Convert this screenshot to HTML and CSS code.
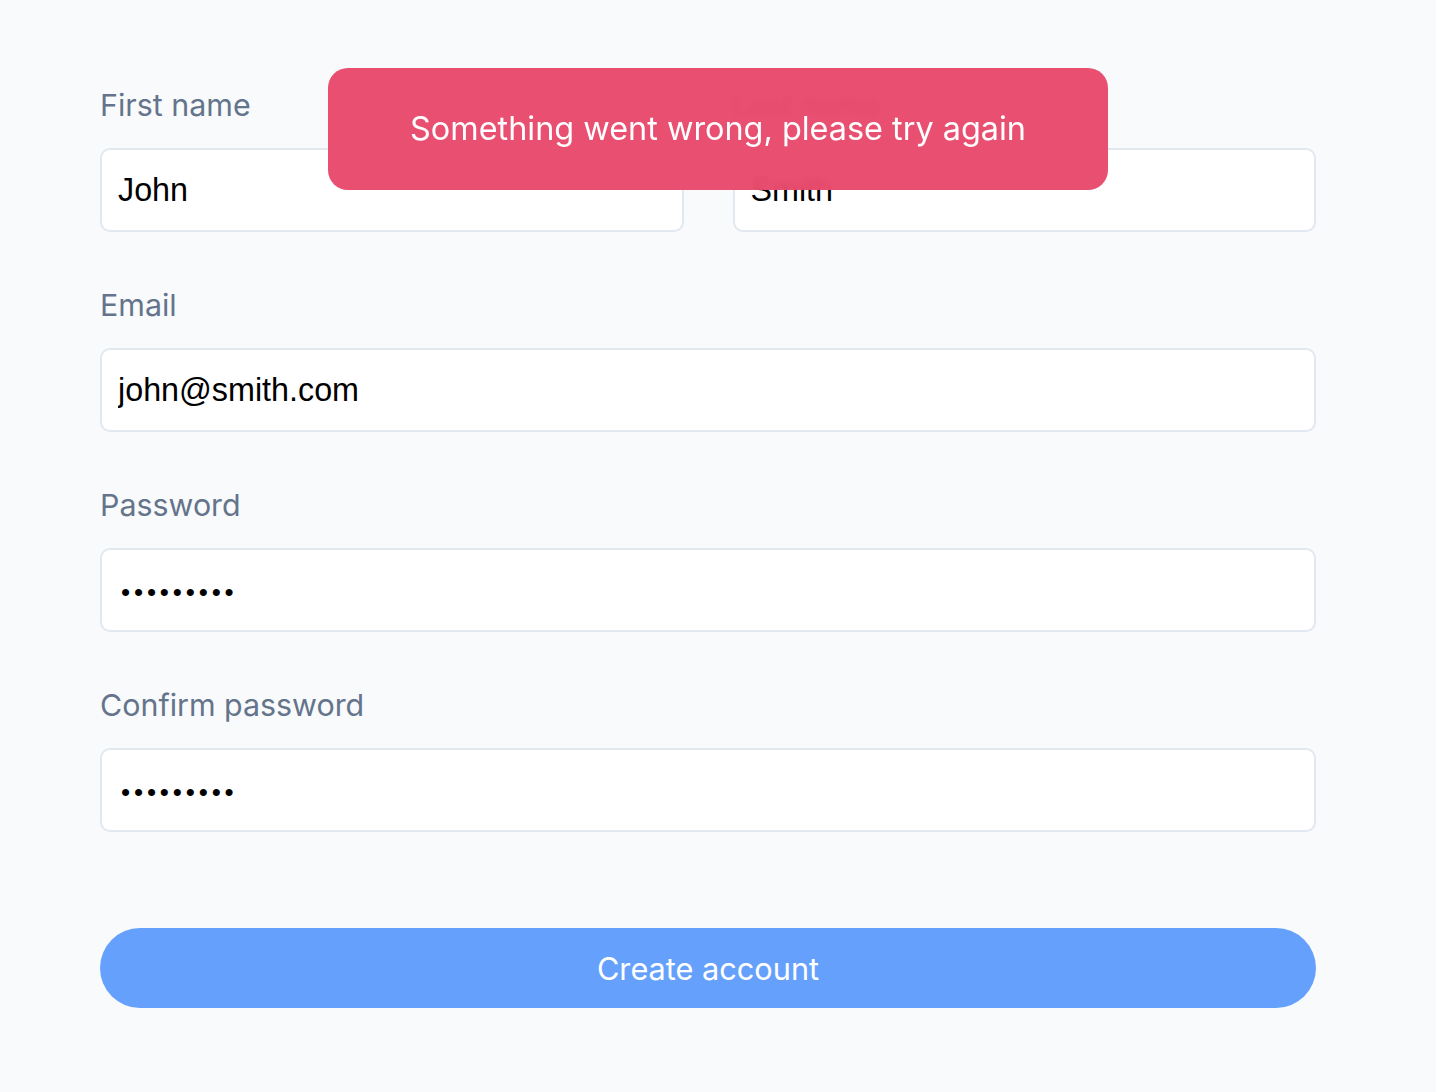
FILE: index.html
```html
<!DOCTYPE html>
<html lang="en">
<head>
<meta charset="utf-8">
<title>Create account</title>
<link rel="stylesheet" href="styles.css">
</head>
<body>
<main class="page">
  <form class="form">
    <div class="row">
      <div class="field">
        <label class="label" for="first">First name</label>
        <input class="input" id="first" type="text" value="John">
      </div>
      <div class="field">
        <label class="label" for="last">Last name</label>
        <input class="input" id="last" type="text" value="Smith">
      </div>
    </div>
    <div class="field">
      <label class="label" for="email">Email</label>
      <input class="input" id="email" type="email" value="john@smith.com">
    </div>
    <div class="field">
      <label class="label" for="pw">Password</label>
      <input class="input input-secret" id="pw" type="password" value="secret123">
    </div>
    <div class="field">
      <label class="label" for="pw2">Confirm password</label>
      <input class="input input-secret" id="pw2" type="password" value="secret123">
    </div>
    <button class="submit" type="button">Create account</button>
  </form>
  <div class="toast" role="alert">Something went wrong, please try again</div>
</main>
</body>
</html>
```
FILE: styles.css
```css
html, body {
  margin: 0;
  padding: 0;
  background: #f8fafc;
}
body {
  font-family: Inter, "Noto Sans", sans-serif;
}
.page {
  position: relative;
  min-height: 1092px;
  padding: 85px 120px 0 100px;
  box-sizing: border-box;
}
.form {
  width: 1216px;
  display: flex;
  flex-direction: column;
  gap: 53px;
}
.row {
  display: grid;
  grid-template-columns: 1fr 1fr;
  column-gap: 49px;
}
.field {
  display: flex;
  flex-direction: column;
}
.label {
  font-size: 30.4px;
  line-height: 40px;
  color: #64748b;
  margin-bottom: 23px;
}
.input {
  box-sizing: border-box;
  height: 84px;
  width: 100%;
  border: 2px solid #e2e8f0;
  border-radius: 10px;
  background: #ffffff;
  padding: 0 16px;
  font-family: "Liberation Sans", Arial, sans-serif;
  font-size: 32.3px;
  color: #000000;
  outline: none;
}
.input-secret {
  font-size: 26px;
  letter-spacing: 3.85px;
  padding-left: 19px;
  padding-top: 4px;
}
.submit {
  margin-top: 43px;
  height: 80px;
  border: none;
  border-radius: 40px;
  background: #65a1fc;
  color: #ffffff;
  font-family: Inter, "Noto Sans", sans-serif;
  font-size: 30.7px;
  cursor: pointer;
}
.toast {
  position: absolute;
  top: 68px;
  left: 328px;
  width: 780px;
  height: 122px;
  box-sizing: border-box;
  border-radius: 20px;
  background: rgba(232, 72, 106, 0.96);
  backdrop-filter: blur(3px);
  color: #ffffff;
  font-size: 32.4px;
  padding-bottom: 2px;
  display: flex;
  align-items: center;
  justify-content: center;
}
```
